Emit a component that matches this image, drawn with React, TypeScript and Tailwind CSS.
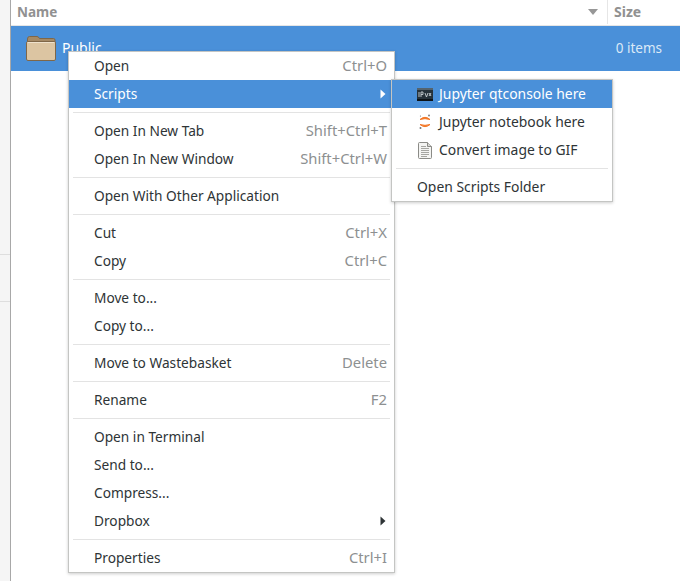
const font = "font-['Noto_Sans','Open_Sans',sans-serif]";

type Item = { label: string; shortcut?: string; active?: boolean; arrow?: boolean } | "sep";

const items: Item[] = [
  { label: "Open", shortcut: "Ctrl+O" },
  { label: "Scripts", active: true, arrow: true },
  "sep",
  { label: "Open In New Tab", shortcut: "Shift+Ctrl+T" },
  { label: "Open In New Window", shortcut: "Shift+Ctrl+W" },
  "sep",
  { label: "Open With Other Application" },
  "sep",
  { label: "Cut", shortcut: "Ctrl+X" },
  { label: "Copy", shortcut: "Ctrl+C" },
  "sep",
  { label: "Move to..." },
  { label: "Copy to..." },
  "sep",
  { label: "Move to Wastebasket", shortcut: "Delete" },
  "sep",
  { label: "Rename", shortcut: "F2" },
  "sep",
  { label: "Open in Terminal" },
  { label: "Send to..." },
  { label: "Compress..." },
  { label: "Dropbox", arrow: true },
  "sep",
  { label: "Properties", shortcut: "Ctrl+I" },
];

function Arrow({ color }: { color: string }) {
  return (
    <svg width="6" height="10" viewBox="0 0 6 10">
      <path d="M0.5 0.5 L5.5 5 L0.5 9.5 Z" fill={color} />
    </svg>
  );
}

function Folder() {
  return (
    <svg width="30" height="25" viewBox="0 0 30 25">
      <path d="M1.5 3 Q1.5 0.5 3.5 0.5 H11 Q12.5 0.5 13.5 2.5 H27.5 Q29 2.5 29 4 V12 H1.5 Z" fill="#a58a66" stroke="#7f6748" />
      <rect x="0.5" y="5.5" width="29" height="19" rx="1.5" fill="#dcc5a2" stroke="#7f6748" />
      <path d="M1.5 6.5 H28.5" stroke="#efe2cd" />
    </svg>
  );
}

function IPythonIcon() {
  return (
    <svg width="16" height="13" viewBox="0 0 16 13">
      <rect width="16" height="13" fill="#26323a" />
      <rect width="16" height="2" fill="#54636e" />
      <rect y="11" width="16" height="2" fill="#0c1216" />
      <path d="M2 4 V9 M4 9 V4 H6 V6.5 H4 M8 5 L9.5 9 L11 5 M12 5 L14 8 M14 5 L12 8" stroke="#c8d0d4" strokeWidth="0.9" fill="none" />
    </svg>
  );
}

function JupyterIcon() {
  return (
    <svg width="12" height="16" viewBox="0 0 12 16">
      <path d="M1 5.5 Q6 1.2 11 5.5 Q6 3.8 1 5.5 Z" fill="#f37726" stroke="#f37726" />
      <path d="M1 10.5 Q6 14.8 11 10.5 Q6 12.2 1 10.5 Z" fill="#f37726" stroke="#f37726" />
      <circle cx="10" cy="1.5" r="0.9" fill="#767677" />
      <circle cx="1.5" cy="14" r="1" fill="#767677" />
      <circle cx="1.5" cy="2" r="0.6" fill="#767677" />
    </svg>
  );
}

function TextIcon() {
  return (
    <svg width="14" height="17" viewBox="0 0 14 17">
      <path d="M0.5 1.5 Q0.5 0.5 1.5 0.5 H9.5 L13.5 4.5 V15.5 Q13.5 16.5 12.5 16.5 H1.5 Q0.5 16.5 0.5 15.5 Z" fill="#f4f4f2" stroke="#8b8b87" />
      <path d="M9.5 0.5 V4.5 H13.5" fill="#d8d8d4" stroke="#8b8b87" />
      <path d="M3 4.5 H8 M3 6.5 H11 M3 8.5 H11 M3 10.5 H11 M3 12.5 H11 M3 14.5 H9" stroke="#a5a5a1" />
    </svg>
  );
}

function Separator() {
  return (
    <div className="flex h-[9px] items-center px-[4px]">
      <div className="h-px w-full bg-[#e3e3e3]" />
    </div>
  );
}

function ContextMenu() {
  return (
    <div className="absolute left-[68px] top-[51px] w-[327px] border border-[#c4c5c3] bg-white text-[13.7px] text-[#2e3436] shadow-[0_1px_3px_rgba(0,0,0,0.2)]">
      {items.map((item, i) =>
        item === "sep" ? (
          <Separator key={i} />
        ) : (
          <div
            key={i}
            className={`flex h-[28px] items-center justify-between pl-[25px] pr-[7px] ${
              item.active ? "bg-[#4a90d9] text-white" : ""
            }`}
          >
            <span>{item.label}</span>
            {item.shortcut && <span className="pb-[2px] text-[14.8px] text-[#8d9091]">{item.shortcut}</span>}
            {item.arrow && (
              <span className="pr-[1px]">
                <Arrow color={item.active ? "#ffffff" : "#2e3436"} />
              </span>
            )}
          </div>
        ),
      )}
    </div>
  );
}

function ScriptsMenu() {
  return (
    <div className="absolute left-[391px] top-[79px] w-[222px] border border-[#c4c5c3] bg-white text-[13.9px] text-[#2e3436] shadow-[0_1px_3px_rgba(0,0,0,0.2)]">
      <div className="flex h-[28px] items-center bg-[#4a90d9] text-white">
        <span className="flex w-[47px] justify-end pr-[6px]"><IPythonIcon /></span>
        <span>Jupyter qtconsole here</span>
      </div>
      <div className="flex h-[28px] items-center">
        <span className="flex w-[47px] justify-end pr-[8px]"><JupyterIcon /></span>
        <span>Jupyter notebook here</span>
      </div>
      <div className="flex h-[28px] items-center">
        <span className="flex w-[47px] justify-end pr-[7px]"><TextIcon /></span>
        <span>Convert image to GIF</span>
      </div>
      <Separator />
      <div className="flex h-[28px] items-center pl-[25px]">Open Scripts Folder</div>
    </div>
  );
}

export default function App() {
  return (
    <div className={`relative flex h-[581px] w-[680px] overflow-hidden bg-white ${font}`}>
      {/* sidebar sliver */}
      <div className="w-[11px] shrink-0 border-r border-[#a8a8a8] bg-[#f5f5f5]">
        <div className="h-[255px] border-b border-[#dedede]" />
        <div className="h-[47px] border-b border-[#dedede]" />
      </div>

      <div className="flex-1">
        <div className="flex h-[26px] items-center border-b border-[#e6e6e6] pb-[2px] text-[14px] font-bold text-[#919191]">
          <div className="flex h-[24px] w-[597px] items-center justify-between border-r border-[#e6e6e6] pl-[6px] pr-[9px]">
            <span className="pt-[2px] text-[13.5px]">Name</span>
            <svg width="10" height="6" viewBox="0 0 10 6">
              <path d="M0 0 H10 L5 6 Z" fill="#979797" />
            </svg>
          </div>
          <span className="pl-[6px]">Size</span>
        </div>
        <div className="flex h-[45px] items-center justify-between bg-[#4a90d9] pl-[15px] pr-[18px] text-[14px] text-white">
          <div className="flex items-center gap-[6px]">
            <Folder />
            <span className="-mt-[2px]">Public</span>
          </div>
          <span className="text-[13.5px] text-[#dbe9f7]">0 items</span>
        </div>
      </div>

      <ContextMenu />
      <ScriptsMenu />
    </div>
  );
}
